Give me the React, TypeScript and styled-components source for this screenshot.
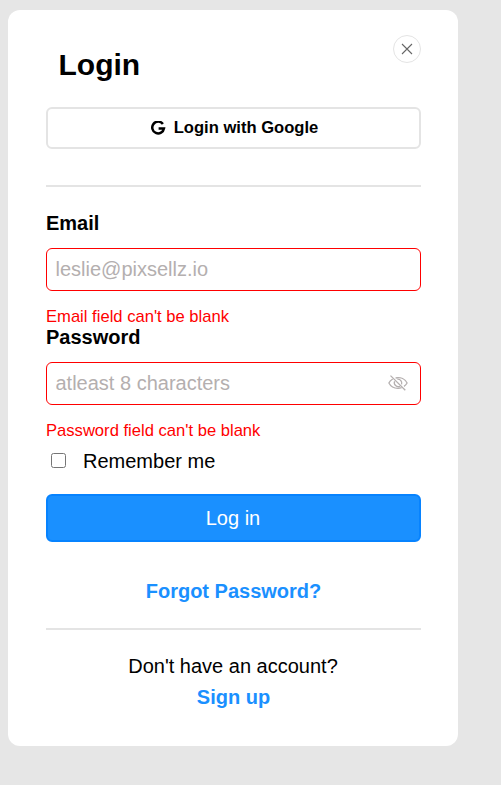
import React from "react";
import styled, { createGlobalStyle, css } from "styled-components";

const GlobalStyle = createGlobalStyle`
  * { box-sizing: border-box; }
  body {
    margin: 0;
    background: #e6e6e6;
    color: #000;
    font-family: Arial, "Liberation Sans", sans-serif;
    font-size: 20px;
    line-height: 23px;
  }
`;

const Card = styled.main`
  width: 450px;
  height: 736px;
  margin: 10px 0 0 8px;
  padding: 25px 37px 0 38px;
  background: #fff;
  border-radius: 12px;
`;

const Header = styled.header`
  display: flex;
  justify-content: space-between;
  align-items: flex-start;
  height: 72px;
`;

const Title = styled.h1`
  margin: 13px 0 0 12.5px;
  font-size: 30px;
  line-height: 34px;
`;

const CloseButton = styled.button`
  display: flex;
  align-items: center;
  justify-content: center;
  width: 28px;
  height: 28px;
  padding: 0;
  border: 1px solid #e4e4e4;
  border-radius: 50%;
  background: #fff;
  color: #666;
`;

const GoogleButton = styled.button`
  display: flex;
  align-items: center;
  justify-content: center;
  gap: 8px;
  width: 100%;
  height: 42px;
  padding: 0 0 0 2px;
  border: 2px solid #e4e4e4;
  border-radius: 6px;
  background: #fff;
  color: #000;
  font: bold 16.6px/20px Arial, "Liberation Sans", sans-serif;
`;

const Divider = styled.hr<{ $top: number; $bottom: number }>`
  height: 2px;
  margin: ${(p) => p.$top}px 0 ${(p) => p.$bottom}px;
  border: 0;
  background: #e4e4e4;
`;

const Field = styled.div`
  height: 114px;
`;

const Label = styled.label`
  display: block;
  font-weight: bold;
`;

const InputBox = styled.div`
  display: flex;
  align-items: center;
  height: 43px;
  margin-top: 13px;
  padding: 0 12px 0 8.5px;
  border: 1px solid #f00;
  border-radius: 6px;
  color: #b4afaf;
  svg { flex: none; }
`;

const Input = styled.input`
  flex: 1;
  min-width: 0;
  padding: 0;
  border: 0;
  outline: 0;
  background: none;
  font: 20px/23px Arial, "Liberation Sans", sans-serif;
  &::placeholder { color: #b4afaf; opacity: 1; }
`;

const ErrorText = styled.p`
  margin: 17px 0 0;
  color: #f00;
  font-size: 16.6px;
  line-height: 18px;
`;

const Remember = styled.label`
  display: flex;
  align-items: center;
  gap: 17px;
  margin-top: 10px;
`;

const Checkbox = styled.input`
  width: 15px;
  height: 15px;
  margin: 0 0 2px 5px;
`;

const SubmitButton = styled.button`
  display: block;
  width: 100%;
  height: 48px;
  margin-top: 21px;
  padding: 0 1px 0 0;
  border: 2px solid #0783ff;
  border-radius: 6px;
  background: #1a90ff;
  color: #fff;
  font: 20px/23px Arial, "Liberation Sans", sans-serif;
`;

const linkText = css`
  display: block;
  color: #1a90ff;
  font-weight: bold;
  text-align: center;
  text-decoration: none;
`;

const ForgotLink = styled.a`
  ${linkText}
  margin-top: 38px;
`;

const SignUpLink = styled.a`
  ${linkText}
  margin-top: 8px;
`;

const Prompt = styled.p`
  margin: 0;
  padding-right: 1px;
  text-align: center;
`;

const CloseIcon = () => (
  <svg width="12" height="12" viewBox="0 0 12 12" fill="none" stroke="currentColor" strokeWidth="1.1">
    <path d="M1 1l10 10M11 1L1 11" />
  </svg>
);

const GoogleIcon = () => (
  <svg width="15" height="15" viewBox="0 0 15 15" fill="none" stroke="currentColor" strokeWidth="2.5">
    <path d="M11.9 3A5.9 5.9 0 1 0 13 7.4H7.6" />
  </svg>
);

const EyeOffIcon = () => (
  <svg width="20" height="20" viewBox="0 0 20 20" fill="none" stroke="currentColor" strokeWidth="1.3">
    <path d="M4.7 5C2.9 6 1.6 7.3.9 9c1.8 3.5 5 5.3 9.1 5.3 1.3 0 2.5-.2 3.6-.6M7.6 4c5.1-1 9.6 1.2 11.5 5-.8 1.4-1.8 2.5-3.1 3.4" />
    <path d="M6.6 7.2a4 4 0 0 0 5.4 5.1M9.3 5.2a4 4 0 0 1 4.3 5.2" />
    <path d="M2.5 1.6l14.8 14.6" />
  </svg>
);

export default function App() {
  return (
    <>
      <GlobalStyle />
      <Card>
        <Header>
          <Title>Login</Title>
          <CloseButton aria-label="Close"><CloseIcon /></CloseButton>
        </Header>
        <GoogleButton><GoogleIcon />Login with Google</GoogleButton>
        <Divider $top={36} $bottom={25} />
        <Field>
          <Label htmlFor="email">Email</Label>
          <InputBox>
            <Input id="email" type="email" placeholder="leslie@pixsellz.io" />
          </InputBox>
          <ErrorText>Email field can't be blank</ErrorText>
        </Field>
        <Field>
          <Label htmlFor="password">Password</Label>
          <InputBox>
            <Input id="password" type="password" placeholder="atleast 8 characters" />
            <EyeOffIcon />
          </InputBox>
          <ErrorText>Password field can't be blank</ErrorText>
        </Field>
        <Remember><Checkbox type="checkbox" />Remember me</Remember>
        <SubmitButton>Log in</SubmitButton>
        <ForgotLink href="#">Forgot Password?</ForgotLink>
        <Divider $top={25} $bottom={25} />
        <Prompt>Don't have an account?</Prompt>
        <SignUpLink href="#">Sign up</SignUpLink>
      </Card>
    </>
  );
}
